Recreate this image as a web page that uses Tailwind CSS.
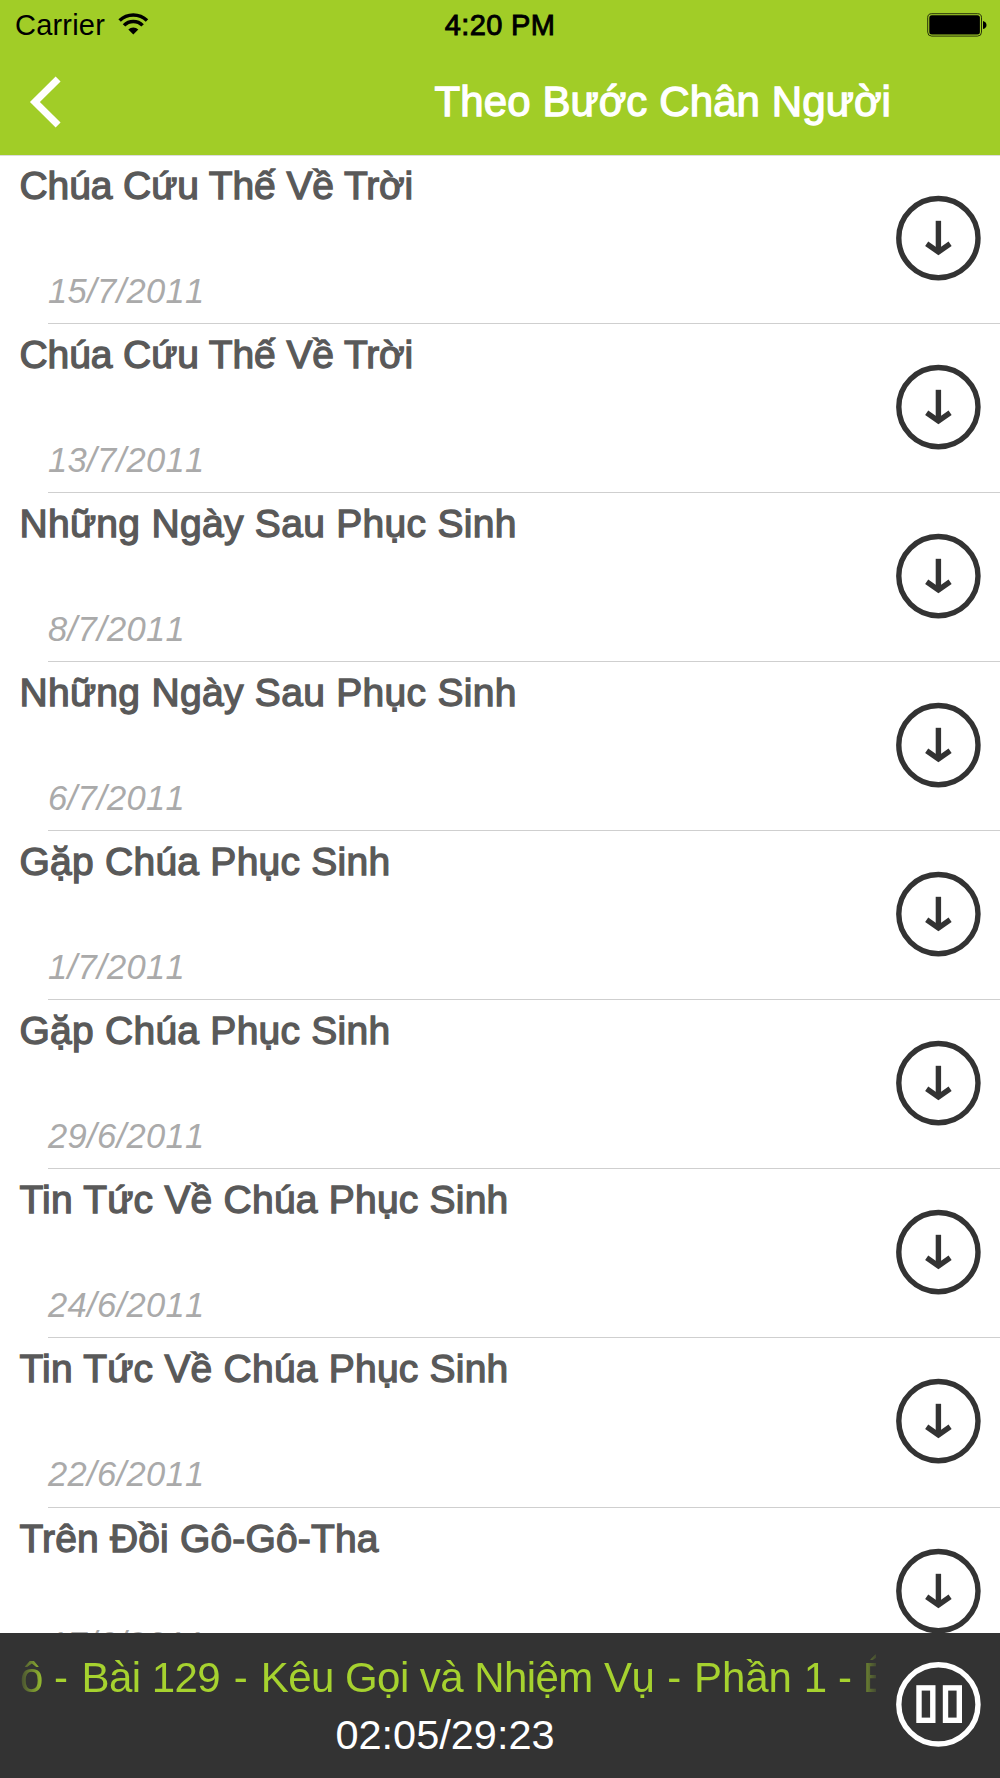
<!DOCTYPE html>
<html lang="vi">
<head>
    <meta charset="UTF-8">
    <meta name="viewport" content="width=device-width, initial-scale=1.0">
    <title>Theo Bước Chân Người</title>
    <script src="https://cdn.jsdelivr.net/npm/@tailwindcss/browser@4"></script>
</head>
<body class="bg-white font-['Liberation_Sans',sans-serif]">
    <div class="w-[1000px] h-[1778px] flex flex-col overflow-hidden">

        <!-- Header -->
        <header class="relative z-10 h-[155px] shrink-0 bg-[#a1cd27] shadow-[0_1px_0_#dcdcdc] flex flex-col">
            <!-- Status bar -->
            <div class="h-[50px] grid grid-cols-3 items-center text-black">
                <div class="flex items-center pl-[15px]">
                    <span class="text-[29px] leading-[50px] tracking-[0.2px]">Carrier</span>
                    <svg class="w-[31px] h-[24px] ml-[13px] mb-[2px]" viewBox="118 12 31 24" fill="none" stroke="#000" stroke-width="3.5">
                        <path d="M119.6 20.6 A19.6 19.6 0 0 1 147 20.6"/>
                        <path d="M124 25.4 A13 13 0 0 1 142.6 25.4"/>
                        <path d="M133.3 34.4 L128.3 29.4 A7.2 7.2 0 0 1 138.3 29.4 Z" fill="#000" stroke="none"/>
                    </svg>
                </div>
                <span class="text-[29px] leading-[50px] tracking-[0.35px] text-center [-webkit-text-stroke:0.9px_#000]">4:20 PM</span>
                <svg class="w-[60px] h-[24px] justify-self-end mr-[13px]" viewBox="927 13 60 24">
                    <rect x="927.7" y="13.7" width="53.8" height="22.4" rx="4" fill="none" stroke="#000" stroke-opacity="0.75"/>
                    <rect x="929.3" y="15.2" width="50.6" height="19.2" rx="2.5" fill="#000"/>
                    <path d="M983 21 Q986.5 22 986.5 25 Q986.5 28 983 29 Z" fill="#000"/>
                </svg>
            </div>
            <!-- Nav bar -->
            <div class="h-[105px] flex items-start justify-between">
                <svg class="w-[36px] h-[56px] mt-[24px] ml-[28px]" viewBox="28 74 36 56" fill="none" stroke="#fff" stroke-width="7">
                    <polyline points="58.1,78.9 34.9,102 58.1,125.1"/>
                </svg>
                <h1 class="text-[42px] leading-[50px] tracking-[0.1px] mt-[27px] mr-[109px] text-white [-webkit-text-stroke:1.3px_#fff] whitespace-nowrap">Theo Bước Chân Người</h1>
            </div>
        </header>

        <!-- Episode list -->
        <main id="list" class="flex-1 min-h-0 overflow-hidden"></main>

        <!-- Player -->
        <footer class="h-[145px] shrink-0 bg-[#333333] flex">
            <div class="w-[856px] ml-[20px] pt-[20px]">
                <div class="overflow-hidden [mask-image:linear-gradient(to_right,rgb(0_0_0/0.15),black_26px,black_830px,rgb(0_0_0/0.15))]">
                    <p class="text-[42px] leading-[50px] tracking-[-0.55px] text-[#a6d22f] whitespace-nowrap">ô <span class="mr-[3px]">-</span> Bài 129 <span class="mx-[2.5px]">-</span> Kêu Gọi và Nhiệm Vụ <span class="mx-[2px]">-</span> <span class="tracking-normal">Phần 1</span> - Ê</p>
                </div>
                <p class="text-[41.5px] leading-[50px] mt-[7px] -ml-[6px] text-center text-white">02:05/29:23</p>
            </div>
            <svg class="w-[124px] h-[145px]" viewBox="876 1633 124 145" fill="none" stroke="#fff" stroke-width="5.4">
                <circle cx="938.4" cy="1704.4" r="39.6"/>
                <rect x="919" y="1687.9" width="13.8" height="32.4"/>
                <rect x="945.5" y="1687.9" width="13.8" height="32.4"/>
            </svg>
        </footer>
    </div>

    <script>
        const episodes = [
            { title: 'Chúa Cứu Thế Về Trời', date: '15/7/2011', tracking: 'tracking-[-0.1px]' },
            { title: 'Chúa Cứu Thế Về Trời', date: '13/7/2011', tracking: 'tracking-[-0.1px]' },
            { title: 'Những Ngày Sau Phục Sinh', date: '8/7/2011', tracking: 'tracking-[0.3px]' },
            { title: 'Những Ngày Sau Phục Sinh', date: '6/7/2011', tracking: 'tracking-[0.3px]' },
            { title: 'Gặp Chúa Phục Sinh', date: '1/7/2011', tracking: 'tracking-[0.25px]' },
            { title: 'Gặp Chúa Phục Sinh', date: '29/6/2011', tracking: 'tracking-[0.25px]' },
            { title: 'Tin Tức Về Chúa Phục Sinh', date: '24/6/2011', tracking: 'tracking-[0.22px]' },
            { title: 'Tin Tức Về Chúa Phục Sinh', date: '22/6/2011', tracking: 'tracking-[0.22px]' },
            { title: 'Trên Đồi Gô-Gô-Tha', date: '17/6/2011', tracking: 'tracking-[0.17px]' }
        ];

        // Render rows
        document.getElementById('list').innerHTML = episodes.map(ep => `
            <div class="h-[169.07px] flex flex-col">
                <div class="flex-1 flex justify-between">
                    <div>
                        <h2 class="text-[39px] leading-[48px] mt-[7px] ml-[19.5px] text-[#595959] [-webkit-text-stroke:1.3px_#595959] whitespace-nowrap ${ep.tracking}">${ep.title}</h2>
                        <p class="text-[34.5px] leading-[40px] mt-[61px] ml-[48px] italic text-[#aaaaaa] tracking-[0.35px] [font-kerning:none]">${ep.date}</p>
                    </div>
                    <svg class="w-[124px] h-[168px]" viewBox="0 0 124 168" fill="none" stroke="#333" stroke-width="5.4">
                        <circle cx="62.4" cy="83.1" r="39.6"/>
                        <path d="M62.4 65.8 V97"/>
                        <polyline points="50.7,88.8 62.4,97 74.1,88.8"/>
                    </svg>
                </div>
                <div class="h-px ml-[48px] bg-[#cfcfcf]"></div>
            </div>
        `).join('');
    </script>
</body>
</html>
